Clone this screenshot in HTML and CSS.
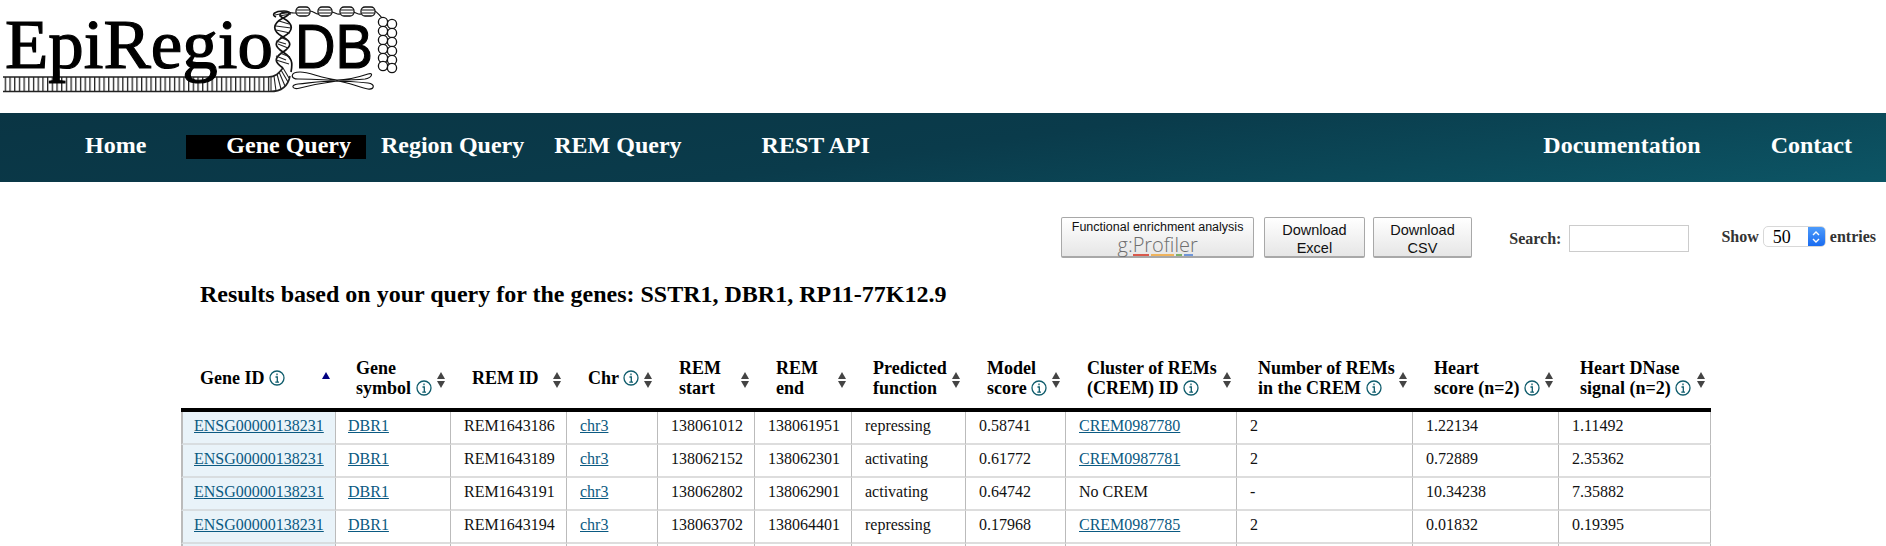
FILE: index.html
```html
<!DOCTYPE html>
<html lang="en">
<head>
<meta charset="utf-8">
<title>EpiRegioDB</title>
<link rel="stylesheet" href="styles.css">
</head>
<body>
<header class="brand">
  <svg class="logo" width="410" height="100" viewBox="0 0 410 100">
    <defs>
      <pattern id="rungs" width="4.7" height="16" patternUnits="userSpaceOnUse">
        <rect x="0" width="1.3" height="16" fill="#222"/>
      </pattern>
    </defs>
    <rect x="3" y="77" width="268" height="14.5" fill="url(#rungs)"/>
    <path d="M3 77H268C276 77 279 73 283 68M3 91.500H270C280 91.500 288 87 290 76" fill="none" stroke="#222" stroke-width="1.600"/>
    <path d="M271 77V91M274 76L276 91M277 74L281 89M279 72L285 86M281 70L288 82M283 68L289 78" stroke="#222" stroke-width="1.100" fill="none"/>
    <path d="M283 68C274 62 274 58 283 52C292 46 292 42 283 37C272 31 272 24 283 18C292 14 290 11 284 11C274 11 271 15 276 17" fill="none" stroke="#111" stroke-width="1.700"/>
    <path d="M291 72C293 62 292 58 283 52C274 46 274 42 283 37C294 31 294 24 283 18C277 15 280 11 291 13" fill="none" stroke="#111" stroke-width="1.700"/>
    <path d="M276 60L289 64M276 56L286 60M280 53L290 57M278 44L288 48M276 41L286 44M280 37L289 41M276 30L290 33M276 26L291 28M279 21L289 24M275 15L290 12M279 16L291 14" stroke="#222" stroke-width="1.100" fill="none"/>
    <path d="M290 12.500C294 13 293 13 296 13M310 11C314 11 316 15 319 14M331 12C335 12 337 15 340 14M352 12C356 12 358 15 361 14M373 10C378 12 378 14 382 18" stroke="#111" stroke-width="1.200" fill="none"/>
    <g fill="#fff" stroke="#111" stroke-width="1.300">
      <rect x="296" y="7" width="14" height="9" rx="4"/>
      <rect x="318" y="7" width="14" height="9" rx="4"/>
      <rect x="340" y="7" width="14" height="9" rx="4"/>
      <rect x="361" y="7" width="14" height="9" rx="4"/>
    </g>
    <path d="M297 10H309M297 13H309M319 10H331M319 13H331M341 10H353M341 13H353M362 10H374M362 13H374" stroke="#111" stroke-width="1.100"/>
    <g fill="#fff" stroke="#111" stroke-width="1.300">
      <circle cx="383" cy="22" r="4.600"/><circle cx="392" cy="24" r="4.600"/>
      <circle cx="383" cy="31" r="4.600"/><circle cx="392" cy="33" r="4.600"/>
      <circle cx="383" cy="40" r="4.600"/><circle cx="392" cy="42" r="4.600"/>
      <circle cx="383" cy="49" r="4.600"/><circle cx="392" cy="51" r="4.600"/>
      <circle cx="383" cy="58" r="4.600"/><circle cx="392" cy="60" r="4.600"/>
      <circle cx="383" cy="66" r="4.600"/><circle cx="392" cy="68" r="4.600"/>
    </g>
    <path d="M337 80C320 78 310 72 300 72C290 72 290 79 298 79C312 79 322 80 337 80C350 80 362 76 368 74C374 72 372 78 365 79C355 80 345 80 337 80M337 81C320 81 310 83 298 84C290 85 292 90 300 88C312 85 322 83 337 81C348 82 358 87 368 89C374 90 376 84 368 83C358 82 348 81 337 81" fill="#fff" stroke="#111" stroke-width="1.200"/>
    <text class="logo-serif" x="5" y="68" textLength="268" lengthAdjust="spacingAndGlyphs">EpiRegio</text>
    <text class="logo-sans" x="295" y="68" textLength="78" lengthAdjust="spacingAndGlyphs">DB</text>
  </svg>
</header>

<nav class="topnav">
  <a class="nav-home" href="#">Home</a>
  <a class="nav-gene" href="#">Gene Query</a>
  <a class="nav-region" href="#">Region Query</a>
  <a class="nav-rem" href="#">REM Query</a>
  <a class="nav-rest" href="#">REST API</a>
  <a class="nav-docs" href="#">Documentation</a>
  <a class="nav-contact" href="#">Contact</a>
</nav>

<section class="toolbar">
  <button class="btn btn-wide" type="button">
    <span class="btn-small">Functional enrichment analysis</span>
    <span class="gprofiler">g:Profiler</span>
    <span class="stripes"><i class="s1"></i><i class="s2"></i><i class="s3"></i><i class="s4"></i></span>
  </button>
  <button class="btn btn-dl" type="button">Download<br>Excel</button>
  <button class="btn btn-dl" type="button">Download<br>CSV</button>
  <label class="search">Search: <input class="search-input" type="text"></label>
  <div class="length">
    <span>Show</span>
    <span class="fake-select"><span class="sel-val">50</span><span class="sel-arrow"><svg width="10" height="16" viewBox="0 0 10 16"><path d="M2 6L5 3L8 6M2 10L5 13L8 10" fill="none" stroke="#fff" stroke-width="1.400"/></svg></span></span>
    <span>entries</span>
  </div>
</section>

<h2 class="title">Results based on your query for the genes: SSTR1, DBR1, RP11-77K12.9</h2>

<table class="results">
  <colgroup>
    <col class="c1"><col class="c2"><col class="c3"><col class="c4"><col class="c5"><col class="c6"><col class="c7"><col class="c8"><col class="c9"><col class="c10"><col class="c11"><col class="c12">
  </colgroup>
  <thead>
    <tr>
      <th>Gene ID <svg class="info" viewBox="0 0 16 16"><circle cx="8" cy="8" r="7"/><path d="M6.500 7H8.300V12M6.300 12.200H10M8 3.500V5.300"/></svg><span class="sort sort-asc"></span></th>
      <th>Gene<br>symbol <svg class="info" viewBox="0 0 16 16"><circle cx="8" cy="8" r="7"/><path d="M6.500 7H8.300V12M6.300 12.200H10M8 3.500V5.300"/></svg><span class="sort"></span></th>
      <th>REM ID<span class="sort"></span></th>
      <th>Chr <svg class="info" viewBox="0 0 16 16"><circle cx="8" cy="8" r="7"/><path d="M6.500 7H8.300V12M6.300 12.200H10M8 3.500V5.300"/></svg><span class="sort"></span></th>
      <th>REM<br>start<span class="sort"></span></th>
      <th>REM<br>end<span class="sort"></span></th>
      <th>Predicted<br>function<span class="sort"></span></th>
      <th>Model<br>score <svg class="info" viewBox="0 0 16 16"><circle cx="8" cy="8" r="7"/><path d="M6.500 7H8.300V12M6.300 12.200H10M8 3.500V5.300"/></svg><span class="sort"></span></th>
      <th>Cluster of REMs<br>(CREM) ID <svg class="info" viewBox="0 0 16 16"><circle cx="8" cy="8" r="7"/><path d="M6.500 7H8.300V12M6.300 12.200H10M8 3.500V5.300"/></svg><span class="sort"></span></th>
      <th>Number of REMs<br>in the CREM <svg class="info" viewBox="0 0 16 16"><circle cx="8" cy="8" r="7"/><path d="M6.500 7H8.300V12M6.300 12.200H10M8 3.500V5.300"/></svg><span class="sort"></span></th>
      <th>Heart<br>score (n=2) <svg class="info" viewBox="0 0 16 16"><circle cx="8" cy="8" r="7"/><path d="M6.500 7H8.300V12M6.300 12.200H10M8 3.500V5.300"/></svg><span class="sort"></span></th>
      <th>Heart DNase<br>signal (n=2) <svg class="info" viewBox="0 0 16 16"><circle cx="8" cy="8" r="7"/><path d="M6.500 7H8.300V12M6.300 12.200H10M8 3.500V5.300"/></svg><span class="sort"></span></th>
    </tr>
  </thead>
  <tbody>
    <tr>
      <td><a href="#">ENSG00000138231</a></td><td><a href="#">DBR1</a></td><td>REM1643186</td><td><a href="#">chr3</a></td><td>138061012</td><td>138061951</td><td>repressing</td><td>0.58741</td><td><a href="#">CREM0987780</a></td><td>2</td><td>1.22134</td><td>1.11492</td>
    </tr>
    <tr>
      <td><a href="#">ENSG00000138231</a></td><td><a href="#">DBR1</a></td><td>REM1643189</td><td><a href="#">chr3</a></td><td>138062152</td><td>138062301</td><td>activating</td><td>0.61772</td><td><a href="#">CREM0987781</a></td><td>2</td><td>0.72889</td><td>2.35362</td>
    </tr>
    <tr>
      <td><a href="#">ENSG00000138231</a></td><td><a href="#">DBR1</a></td><td>REM1643191</td><td><a href="#">chr3</a></td><td>138062802</td><td>138062901</td><td>activating</td><td>0.64742</td><td>No CREM</td><td>-</td><td>10.34238</td><td>7.35882</td>
    </tr>
    <tr>
      <td><a href="#">ENSG00000138231</a></td><td><a href="#">DBR1</a></td><td>REM1643194</td><td><a href="#">chr3</a></td><td>138063702</td><td>138064401</td><td>repressing</td><td>0.17968</td><td><a href="#">CREM0987785</a></td><td>2</td><td>0.01832</td><td>0.19395</td>
    </tr>
    <tr class="row-cut">
      <td></td><td></td><td></td><td></td><td></td><td></td><td></td><td></td><td></td><td></td><td></td><td></td>
    </tr>
  </tbody>
</table>
</body>
</html>
```

FILE: styles.css
```css
* { box-sizing: border-box; }
html, body { height: 100%; overflow: hidden; }
body {
  margin: 0;
  background: #fff;
  color: #000;
  font-family: "Liberation Serif", "Times New Roman", serif;
  font-size: 16px;
}

.brand { height: 113px; }
.logo { display: block; filter: blur(0.35px); }
.logo-serif { font-family: "Liberation Serif", serif; font-size: 70px; fill: #000; stroke: #000; stroke-width: 1.2px; }
.logo-sans { font-family: "Liberation Sans", sans-serif; font-size: 63px; fill: #000; stroke: #000; stroke-width: 1.2px; }

.topnav {
  height: 69px;
  display: flex;
  align-items: flex-start;
  padding: 22px 34px 0 85px;
  background: linear-gradient(172deg, #0a3544 0%, #0a3b4b 50%, #0c5565 100%);
  font-size: 24px;
  font-weight: bold;
  line-height: 20px;
}
.topnav a { color: #fff; text-decoration: none; }
.nav-gene {
  margin-left: 40px;
  padding: 0 15px 0 40px;
  height: 24px;
  background: #000;
}
.nav-region { margin-left: 15px; }
.nav-rem { margin-left: 30px; }
.nav-rest { margin-left: 80px; }
.nav-docs { margin-left: auto; }
.nav-contact { margin-left: 70px; }

.toolbar {
  display: flex;
  align-items: flex-start;
  padding: 35px 10px 0 1061px;
  height: 76px;
}
.btn {
  height: 41px;
  margin: 0;
  padding: 3px 0 0;
  border: 1px solid #a8a8a8;
  border-bottom-width: 2px;
  border-radius: 2px;
  background: linear-gradient(#fff, #e6e6e6);
  color: #111;
  font-family: "Liberation Sans", Arial, sans-serif;
  font-size: 14.500px;
  line-height: 18px;
  text-align: center;
}
.btn-wide {
  width: 194px;
  margin-right: 10px;
  display: flex;
  flex-direction: column;
  align-items: center;
  padding-top: 2px;
}
.btn-dl { width: 101px; margin-right: 8px; }
.btn-dl + .btn-dl { width: 100px; margin-right: 37px; }
.btn-small { font-size: 12.500px; line-height: 15px; }
.gprofiler {
  font-family: "Open Sans", sans-serif;
  font-weight: 300;
  font-size: 20px;
  line-height: 19px;
  color: #6e6e6e;
}
.stripes { display: flex; gap: 2px; height: 2px; margin-left: 10px; }
.stripes i { display: block; height: 2px; }
.s1 { width: 16px; background: #d9594c; }
.s2 { width: 23px; background: #efb35c; }
.s3 { width: 6px; background: #7fb069; }
.s4 { width: 9px; background: #6f96d8; }

.search {
  display: flex;
  align-items: center;
  gap: 8px;
  margin-top: 8px;
  height: 27px;
  font-weight: bold;
  color: #333;
}
.search-input {
  width: 120px;
  height: 27px;
  border: 1px solid #ccc;
  background: #fff;
  padding: 0;
}
.length {
  display: flex;
  align-items: center;
  gap: 4px;
  margin-left: 32px;
  margin-top: 9px;
  height: 21px;
  font-weight: bold;
  color: #333;
}
.fake-select {
  display: flex;
  width: 63px;
  height: 21px;
  border: 1px solid #d8d8d8;
  border-radius: 5px;
  overflow: hidden;
  background: #fff;
}
.sel-val {
  flex: 1;
  padding-left: 9px;
  font-weight: normal;
  color: #000;
  line-height: 20px;
  font-size: 18px;
}
.sel-arrow {
  width: 17px;
  display: flex;
  align-items: center;
  justify-content: center;
  background: linear-gradient(#4d9bfb, #1a6cf0);
}

.title {
  margin: 0 0 0 200px;
  height: 98px;
  padding-top: 22px;
  font-size: 24px;
  line-height: 28px;
  font-weight: bold;
}

.results {
  margin-left: 181px;
  width: 1530px;
  table-layout: fixed;
  border-collapse: separate;
  border-spacing: 0;
}
.c1 { width: 155px; }
.c2 { width: 115px; }
.c3 { width: 116px; }
.c4 { width: 91px; }
.c5 { width: 97px; }
.c6 { width: 97px; }
.c7 { width: 114px; }
.c8 { width: 100px; }
.c9 { width: 171px; }
.c10 { width: 176px; }
.c11 { width: 146px; }
.c12 { width: 152px; }

.results th {
  position: relative;
  height: 56px;
  padding: 0 0 9px 21px;
  border-bottom: 4px solid #000;
  font-size: 18px;
  line-height: 20px;
  font-weight: bold;
  text-align: left;
  vertical-align: middle;
  white-space: nowrap;
}
.results th:first-child { padding-left: 19px; }
.results th:nth-child(2) { padding-left: 20px; }
.info {
  width: 16px;
  height: 16px;
  vertical-align: -2px;
  fill: none;
  stroke: #0f5c6c;
  stroke-width: 1.300;
}
.sort {
  position: absolute;
  right: 4px;
  top: 16px;
  width: 10px;
  height: 16px;
}
.sort::before, .sort::after {
  content: "";
  position: absolute;
  left: 0;
  border-left: 4.500px solid transparent;
  border-right: 4.500px solid transparent;
}
.sort::before { top: 0; border-bottom: 7px solid #444; }
.sort::after { top: 9px; border-top: 7px solid #444; }
.sort-asc::before { border-bottom-color: #000080; }
.sort-asc::after { display: none; }

.results td {
  height: 33px;
  padding: 0 0 4px 13px;
  border-right: 1px solid #bbb;
  border-bottom: 2px solid #ddd;
  font-size: 16px;
  line-height: 18px;
  color: #111;
  white-space: nowrap;
}
.results td:first-child {
  padding-left: 11px;
  background: #e9f3f9;
  border-left: 2px solid #bbb;
  border-bottom-color: #d8dde0;
}
.results td:nth-child(2) { padding-left: 12px; }
.results .row-cut td { height: 2px; padding: 0; border-bottom: 0; line-height: 0; font-size: 0; }
.results td a { color: #0b5a82; text-decoration: underline; }
```
